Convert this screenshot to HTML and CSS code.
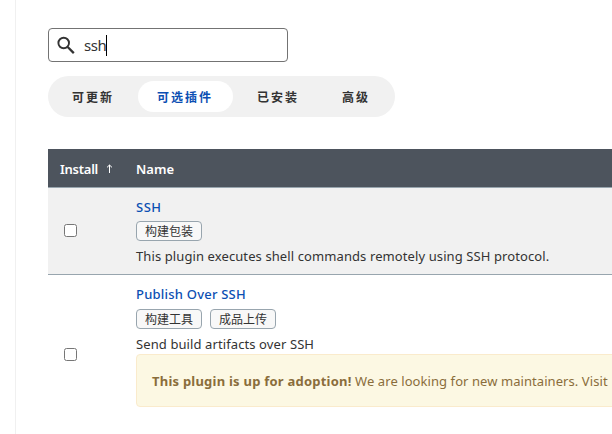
FILE: index.html
```html
<!DOCTYPE html>
<html lang="zh-CN">
<head>
<meta charset="utf-8">
<title>插件管理</title>
<link rel="stylesheet" href="styles.css">
</head>
<body>
<div class="page">
  <aside class="side"></aside>
  <main class="main">
    <div class="search">
      <svg class="search-icon" width="18" height="18" viewBox="0 0 18 18" fill="none" stroke="#333"><circle cx="6.7" cy="7" r="5.3" stroke-width="1.9"/><path d="M10.7 11L16.8 17.1" stroke-width="2.3"/></svg>
      <span class="query">ssh</span><span class="caret"></span>
    </div>
    <nav class="tabs">
      <a class="tab">可更新</a>
      <a class="tab active">可选插件</a>
      <a class="tab">已安装</a>
      <a class="tab">高级</a>
    </nav>
    <div class="table">
      <div class="row head">
        <div class="install"><span class="install-label">Install</span><svg class="arrow" width="7" height="9" viewBox="0 0 7 9" fill="none" stroke="#fff"><path d="M3.5 9V1M1 3.4L3.5 1L6 3.4"/></svg></div>
        <div class="name"><span class="name-label">Name</span></div>
      </div>
      <div class="row first">
        <div class="install"><input class="check" type="checkbox"></div>
        <div class="name">
          <a class="link ssh">SSH</a>
          <div class="labels"><span class="label">构建包装</span></div>
          <div class="desc">This plugin executes shell commands remotely using SSH protocol.</div>
        </div>
      </div>
      <div class="row second">
        <div class="install"><input class="check" type="checkbox"></div>
        <div class="name">
          <a class="link publish">Publish Over SSH</a>
          <div class="labels"><span class="label">构建工具</span><span class="label">成品上传</span></div>
          <div class="desc">Send build artifacts over SSH</div>
          <div class="alert"><strong>This plugin is up for adoption!</strong> We are looking for new maintainers. Visit</div>
        </div>
      </div>
    </div>
  </main>
</div>
</body>
</html>
```
FILE: styles.css
```css
* { box-sizing: border-box; }
body {
  margin: 0;
  background: #fff;
  color: #333;
  font: 13px/20px "Noto Sans", "Noto Sans CJK SC", sans-serif;
  overflow: hidden;
}
.page { display: flex; width: 612px; height: 434px; overflow: hidden; }
.side { flex: 0 0 16px; border-right: 1px solid #f0f0f0; }
.main { flex: 0 0 700px; padding: 28px 0 0 32px; }
.search {
  display: flex;
  align-items: center;
  width: 240px;
  height: 34px;
  padding-left: 8px;
  border: 1px solid #737373;
  border-radius: 4px;
}
.search-icon { margin-right: 9px; }
.query { font-size: 15px; letter-spacing: -0.4px; }
.caret { width: 1px; height: 21px; background: #000; }
.tabs {
  display: flex;
  width: 347px;
  height: 41px;
  margin-top: 14px;
  padding: 5px;
  border-radius: 21px;
  background: #f1f1f1;
}
.tab {
  height: 31px;
  padding: 0 19px;
  margin-right: 5px;
  border-radius: 16px;
  font: 600 12px/31px "Noto Sans CJK SC", sans-serif;
  letter-spacing: 2px;
  white-space: nowrap;
}
.active { padding-right: 20px; background: #fff; color: #0b4fb3; }
.table { margin-top: 32px; }
.row { display: flex; border-bottom: 1px solid #98a5ae; }
.install { display: flex; align-items: center; flex: 0 0 88px; padding-left: 12px; }
.name { flex: 1; min-width: 0; white-space: nowrap; }
.head { height: 39px; padding-top: 1px; align-items: center; background: #4d545d; color: #fff; font-weight: 600; }
.install-label { letter-spacing: -0.25px; }
.arrow { margin-left: 8px; }
.first { height: 87px; padding-top: 9px; background: #f1f1f1; }
.first .install { height: 66px; }
.second { height: 159px; padding-top: 9px; border-bottom: 0; }
.second .install { height: 140px; }
.check { width: 13px; height: 13px; margin: 0 0 0 4px; }
.link { display: block; color: #0b4fb3; font-weight: 500; }
.ssh { letter-spacing: 0.5px; }
.publish { letter-spacing: 0.22px; }
.labels { display: flex; gap: 8px; margin-top: 4px; }
.second .labels { margin-top: 5px; }
.label {
  width: 66px;
  height: 20px;
  border: 1px solid #98a5ae;
  border-radius: 4px;
  background: #f8f8f8;
  font: 12px/18px "Noto Sans CJK SC", sans-serif;
  text-align: center;
}
.desc { margin-top: 5px; letter-spacing: 0.1px; }
.alert {
  height: 53px;
  padding: 0 15px;
  border: 1px solid #faebcc;
  border-radius: 4px;
  background: #fcf8e3;
  color: #8a6d3b;
  line-height: 52px;
  letter-spacing: 0.07px;
}
.alert strong { letter-spacing: 0.23px; }
```
